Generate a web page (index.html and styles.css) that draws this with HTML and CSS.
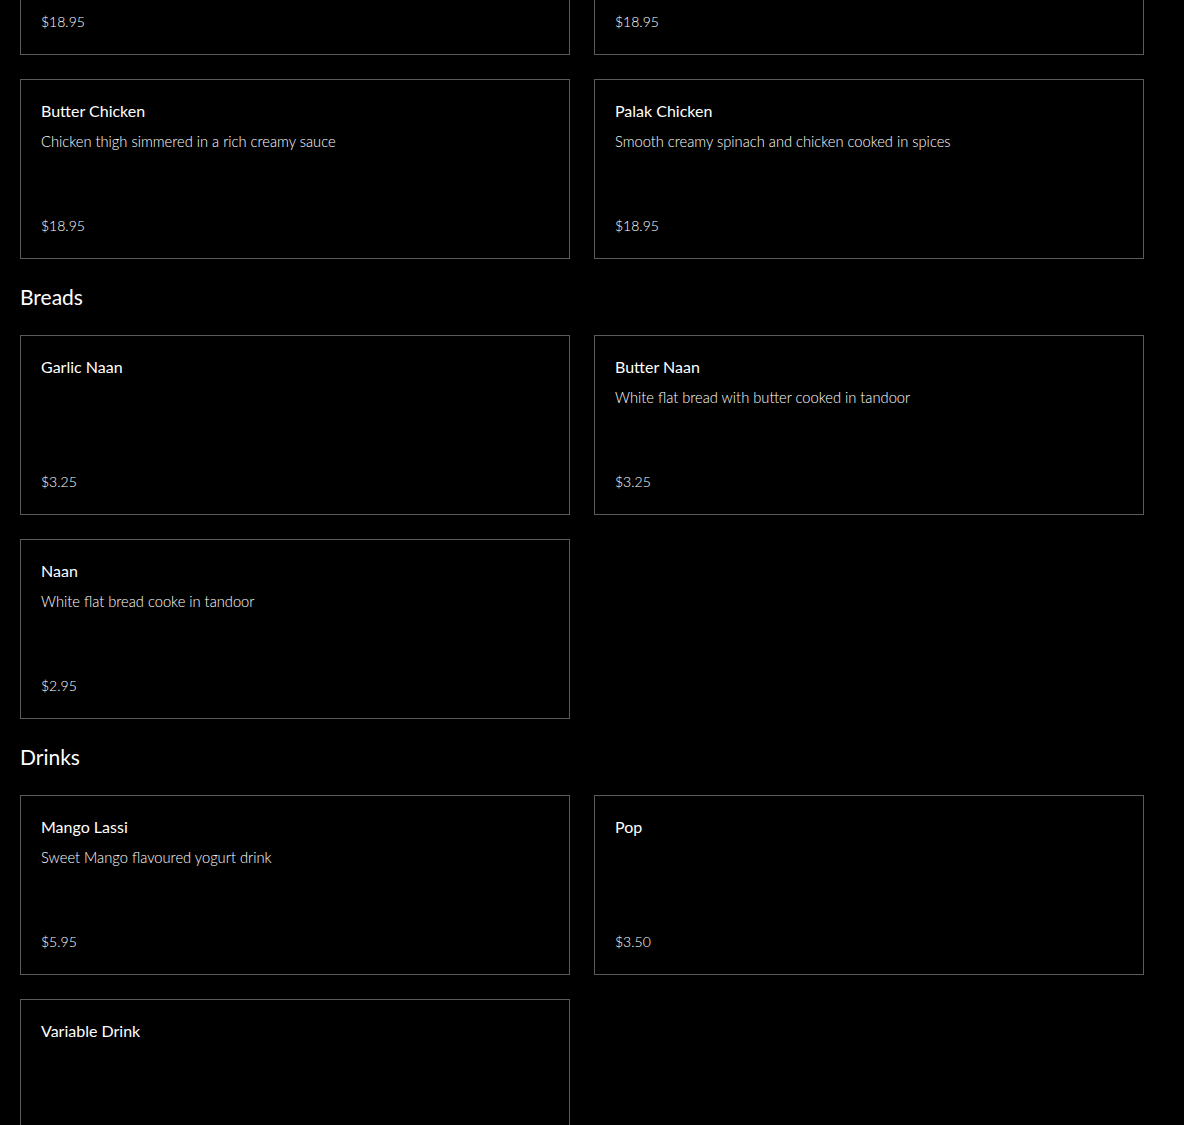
FILE: index.html
```html
<!DOCTYPE html>
<html lang="en">
<head>
    <meta charset="UTF-8">
    <meta name="viewport" content="width=device-width, initial-scale=1.0">
    <title>Menu</title>
    <link rel="stylesheet" href="styles.css">
</head>
<body>
    <main class="menu">
        <section class="menu-section menu-section--scrolled">
            <div class="menu-grid">
                <div class="item">
                    <h3 class="item-name"></h3>
                    <p class="item-desc"></p>
                    <span class="item-price">$18.95</span>
                </div>
                <div class="item">
                    <h3 class="item-name"></h3>
                    <p class="item-desc"></p>
                    <span class="item-price">$18.95</span>
                </div>
                <div class="item">
                    <h3 class="item-name">Butter Chicken</h3>
                    <p class="item-desc">Chicken thigh simmered in a rich creamy sauce</p>
                    <span class="item-price">$18.95</span>
                </div>
                <div class="item">
                    <h3 class="item-name">Palak Chicken</h3>
                    <p class="item-desc">Smooth creamy spinach and chicken cooked in spices</p>
                    <span class="item-price">$18.95</span>
                </div>
            </div>
        </section>

        <section class="menu-section">
            <h2 class="section-title">Breads</h2>
            <div class="menu-grid">
                <div class="item">
                    <h3 class="item-name">Garlic Naan</h3>
                    <p class="item-desc"></p>
                    <span class="item-price">$3.25</span>
                </div>
                <div class="item">
                    <h3 class="item-name">Butter Naan</h3>
                    <p class="item-desc">White flat bread with butter cooked in tandoor</p>
                    <span class="item-price">$3.25</span>
                </div>
                <div class="item">
                    <h3 class="item-name">Naan</h3>
                    <p class="item-desc">White flat bread cooke in tandoor</p>
                    <span class="item-price">$2.95</span>
                </div>
            </div>
        </section>

        <section class="menu-section">
            <h2 class="section-title">Drinks</h2>
            <div class="menu-grid">
                <div class="item">
                    <h3 class="item-name">Mango Lassi</h3>
                    <p class="item-desc">Sweet Mango flavoured yogurt drink</p>
                    <span class="item-price">$5.95</span>
                </div>
                <div class="item">
                    <h3 class="item-name">Pop</h3>
                    <p class="item-desc"></p>
                    <span class="item-price">$3.50</span>
                </div>
                <div class="item">
                    <h3 class="item-name">Variable Drink</h3>
                    <p class="item-desc"></p>
                    <span class="item-price"></span>
                </div>
            </div>
        </section>
    </main>
</body>
</html>
```

FILE: styles.css
```css
* {
    margin: 0;
    padding: 0;
    box-sizing: border-box;
    font-family: "Lato", "Noto Sans", sans-serif;
}

:root {
    --bg-color: #000;
    --text-color: #fff;
    --line: #5a5a5a;
}

body {
    background-color: var(--bg-color);
    color: var(--text-color);
    overflow: hidden;
}

.menu {
    padding: 0 20px;
}

/* page is scrolled down, first row sits partly above the fold */
.menu-section--scrolled {
    margin-top: -125px;
}

.section-title {
    font-size: 21px;
    font-weight: 400;
    line-height: 28px;
    padding-top: 24px;
    margin-bottom: 24px;
}

.menu-grid {
    display: grid;
    grid-template-columns: 550px 550px;
    gap: 24px;
}

.item {
    height: 180px;
    border: 1px solid var(--line);
    padding: 19px 20px 22px;
    display: flex;
    flex-direction: column;
}

.item-name {
    font-size: 16px;
    font-weight: 400;
    line-height: 24px;
}

.item-desc {
    font-size: 14.7px;
    font-weight: 300;
    line-height: 20px;
    margin-top: 8px;
}

.item-price {
    margin-top: auto;
    font-size: 14px;
    font-weight: 300;
    line-height: 20px;
}
```
